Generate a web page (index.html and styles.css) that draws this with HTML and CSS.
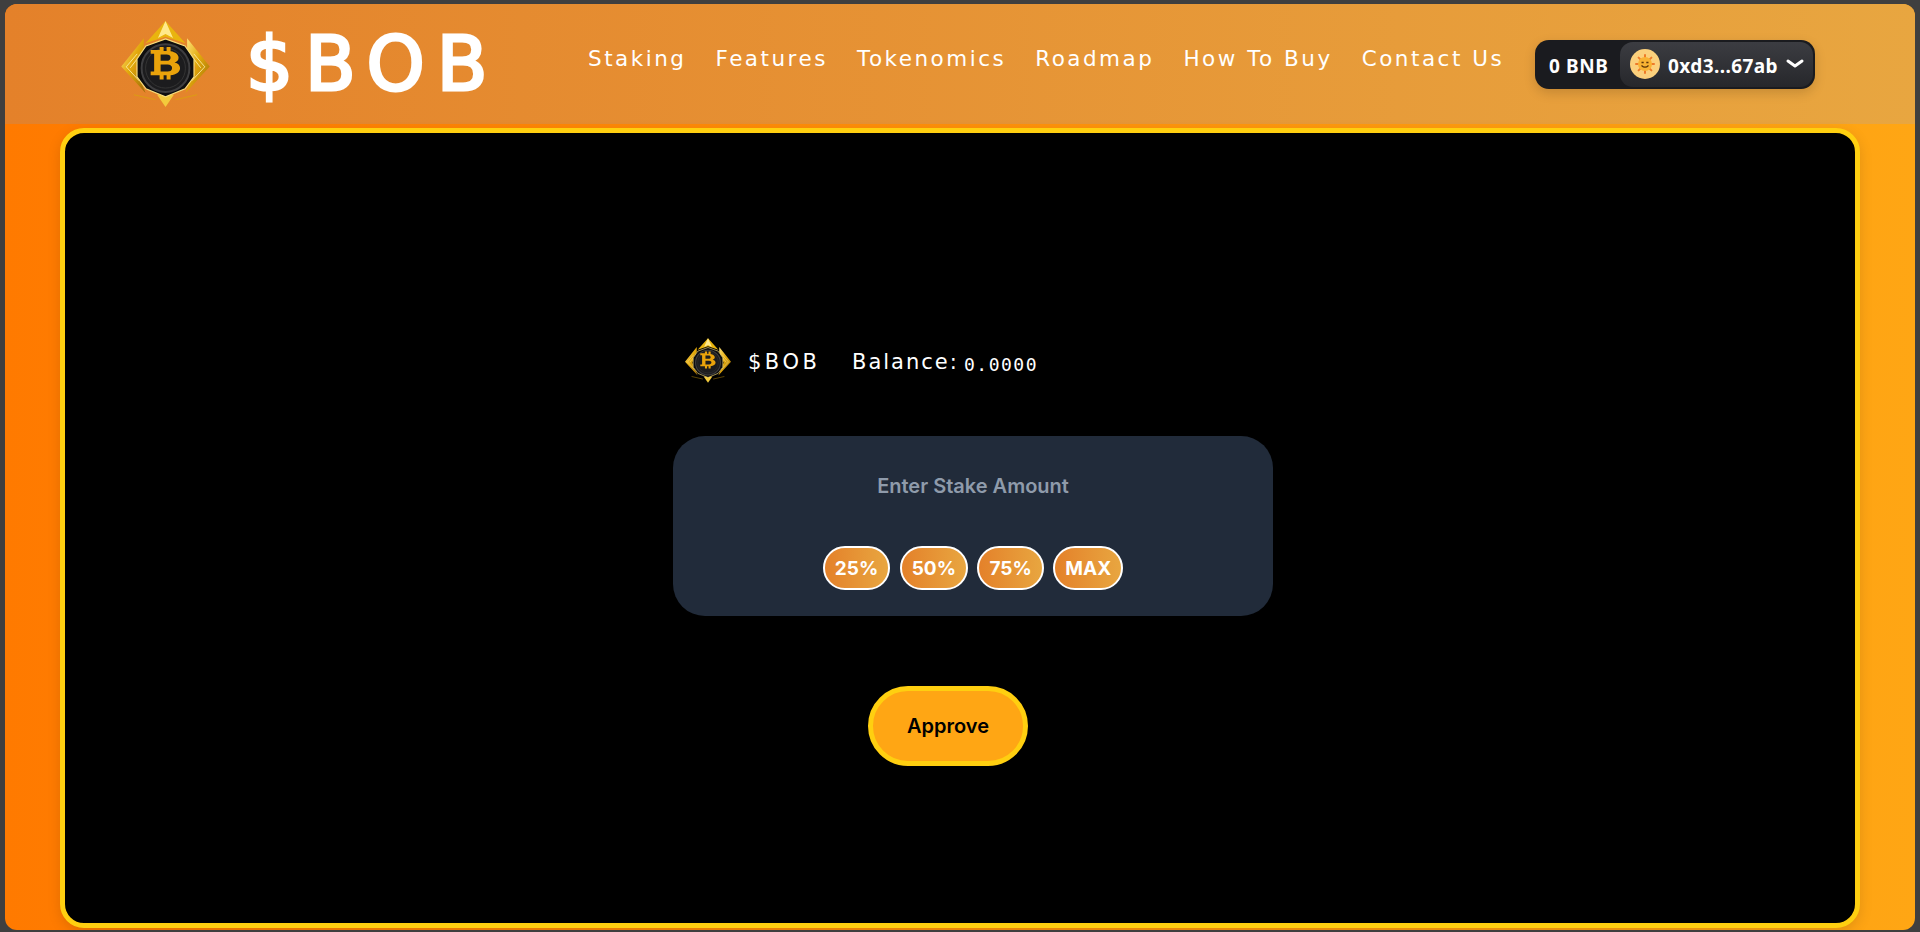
FILE: index.html
```html
<!DOCTYPE html>
<html lang="en">
<head>
    <meta charset="UTF-8">
    <meta name="viewport" content="width=device-width, initial-scale=1">
    <title>$BOB Staking</title>
    <link rel="stylesheet" href="styles.css">
</head>
<body>
    <svg class="defs" width="0" height="0" aria-hidden="true">
        <defs>
            <linearGradient id="goldGrad" x1="0" y1="0" x2="1" y2="1">
                <stop offset="0" stop-color="#ffe680"/>
                <stop offset="0.45" stop-color="#e3a90c"/>
                <stop offset="1" stop-color="#9a6a06"/>
            </linearGradient>
            <symbol id="bobLogo" viewBox="0 0 88.800 86.300">
                <!-- top peak -->
                <path d="M44.400 0 L64.400 22.300 L44.400 15.700 L24.400 22.300 Z" fill="#e9b40e"/>
                <path d="M44.400 0 L52 17 L44.400 13 L36.800 17 Z" fill="#ffe98a"/>
                <!-- side wings -->
                <path d="M22.700 17.300 L0 45.700 L24.400 72.300 L14 47 L22.700 30 Z" fill="url(#goldGrad)"/>
                <path d="M66.100 17.300 L88.800 45.700 L64.400 72.300 L74.800 47 L66.100 30 Z" fill="url(#goldGrad)"/>
                <path d="M5 46 L16 33 M9 47 L16 38 M5 46 L18 60" stroke="#fff3b0" stroke-width="0.800" fill="none"/>
                <path d="M83.800 46 L72.800 33 M79.800 47 L72.800 38 M83.800 46 L70.800 60" stroke="#fff3b0" stroke-width="0.800" fill="none"/>
                <!-- bottom point and thin lines -->
                <path d="M44.400 86.300 L36 74 L52.800 74 Z" fill="#f3cb3c"/>
                <path d="M12.700 74 L34.400 79 M76.100 74 L54.400 79" stroke="#d9a20c" stroke-width="0.800" fill="none"/>
                <!-- black body -->
                <path d="M44.400 18 L64 25 L73 38 L73 56 L64 68 L44.400 76 L24.800 68 L15.800 56 L15.800 38 L24.800 25 Z" fill="#0e0e0f" stroke="#f7dc7a" stroke-width="1.200"/>
                <circle cx="44.400" cy="47.300" r="24" fill="#1c1c1e" stroke="#3e3e40" stroke-width="2"/>
                <circle cx="44.400" cy="47.300" r="20" fill="none" stroke="#333" stroke-width="1"/>
                <path transform="translate(1.500 6.800) scale(1 0.800)" fill-rule="evenodd" fill="#eaa30b" d="M37 24 h4 v5 h3 v-5 h4 v5.500 c5 1 8 4 8 8 c0 3 -1.500 5 -4 6 c3.500 1 5.500 3.500 5.500 7 c0 5 -4 8.500 -9.500 9 v5.500 h-4 v-5.500 h-3 v5.500 h-4 v-5.500 h-9 v-4.500 h3.500 v-22.500 h-3.500 v-4.500 h9 Z M38 33.500 v8 h6 c2.500 0 4 -1.500 4 -4 c0 -2.500 -1.500 -4 -4 -4 Z M38 46 v9 h7 c2.700 0 4.500 -1.700 4.500 -4.500 c0 -2.800 -1.800 -4.500 -4.500 -4.500 Z"/>
            </symbol>
        </defs>
    </svg>

    <div class="frame">
        <header class="topbar">
            <a class="brand" href="#">
                <svg class="brand-logo"><use href="#bobLogo"/></svg>
                <span class="brand-name">$BOB</span>
            </a>
            <nav class="nav">
                <a href="#">Staking</a>
                <a href="#">Features</a>
                <a href="#">Tokenomics</a>
                <a href="#">Roadmap</a>
                <a href="#">How To Buy</a>
                <a href="#">Contact Us</a>
            </nav>
            <div class="wallet">
                <span class="wallet-balance">0 BNB</span>
                <button class="wallet-account">
                    <span class="avatar">
                        <svg viewBox="0 0 30 30" width="30" height="30">
                            <g stroke="#ee7a2a" stroke-width="2" stroke-linecap="round">
                                <path d="M15 6v18M6 15h18M8.600 8.600l12.800 12.800M21.400 8.600L8.600 21.400"/>
                            </g>
                            <circle cx="15" cy="15" r="7" fill="#f9b233"/>
                            <path d="M11.500 13.500h2.200M16.300 13.500h2.200" stroke="#5a3208" stroke-width="1.300"/>
                            <path d="M11.500 16.500q3.500 3.500 7 0" stroke="#5a3208" stroke-width="1.200" fill="none"/>
                        </svg>
                    </span>
                    <span class="wallet-address">0xd3...67ab</span>
                    <svg class="chevron" viewBox="0 0 18 10" width="18" height="10">
                        <path d="M2 2l7 5 7-5" fill="none" stroke="#fff" stroke-width="3" stroke-linecap="round" stroke-linejoin="round"/>
                    </svg>
                </button>
            </div>
        </header>

        <main class="content">
            <section class="panel">
                <div class="token-row">
                    <svg class="token-logo"><use href="#bobLogo"/></svg>
                    <span class="token-name">$BOB</span>
                    <span class="token-label">Balance:</span>
                    <span class="token-value">0.0000</span>
                </div>

                <div class="stake-card">
                    <p class="stake-title">Enter Stake Amount</p>
                    <div class="stake-options">
                        <button class="pct-btn">25%</button>
                        <button class="pct-btn">50%</button>
                        <button class="pct-btn">75%</button>
                        <button class="pct-btn">MAX</button>
                    </div>
                </div>

                <button class="approve-btn">Approve</button>
            </section>
        </main>
    </div>
</body>
</html>
```

FILE: styles.css
```css
* {
    box-sizing: border-box;
}

html, body {
    height: 100%;
}

body {
    margin: 0;
    padding: 4px 5px 2px 5px;
    background-color: #3f3f3f;
    overflow: hidden;
    font-family: 'Inter', sans-serif;
}

.defs {
    display: block;
    height: 0;
}

button {
    font-family: inherit;
    cursor: pointer;
}

a {
    color: inherit;
    text-decoration: none;
}

.frame {
    height: 926px;
    border-radius: 12px;
    overflow: hidden;
    display: flex;
    flex-direction: column;
    background: linear-gradient(90deg, #ff7a00, #ffa614);
}

.topbar {
    height: 120px;
    flex-shrink: 0;
    display: flex;
    align-items: center;
    padding: 0 100px 0 116px;
    background: linear-gradient(90deg, #e4812a, #e8a640);
    color: #fff;
}

.brand {
    display: flex;
    align-items: center;
    gap: 36px;
}

.brand-logo {
    width: 89px;
    height: 86px;
}

.brand-name {
    font-family: 'DejaVu Sans', sans-serif;
    font-size: 74px;
    line-height: 1;
    width: 242px;
    letter-spacing: 12px;
    -webkit-text-stroke: 3px #fff;
    white-space: nowrap;
}

.nav {
    display: flex;
    gap: 29px;
    margin-left: 100px;
    margin-top: -11px;
    font-family: 'DejaVu Sans', sans-serif;
    font-size: 21.500px;
    letter-spacing: 2.500px;
    white-space: nowrap;
}

.wallet {
    margin-left: auto;
    height: 49px;
    width: 280px;
    flex-shrink: 0;
    display: flex;
    align-items: center;
    background-color: #1a1b1f;
    border-radius: 14px;
    box-shadow: 0 4px 12px rgba(0, 0, 0, 0.15);
    font-family: 'Noto Sans', sans-serif;
    font-weight: 700;
    font-size: 19px;
    color: #fff;
}

.wallet-balance {
    padding: 4px 0 0 14px;
    width: 85px;
    flex-shrink: 0;
    letter-spacing: 0.600px;
    white-space: nowrap;
}

.wallet-account {
    flex: 1;
    height: 45px;
    margin-right: 2px;
    display: flex;
    align-items: center;
    gap: 8px;
    padding: 0 9px 0 10px;
    border: none;
    border-radius: 13px;
    background: linear-gradient(#3c3d42, #26272b);
    color: #fff;
    font: inherit;
}

.wallet-address {
    padding-top: 4px;
    letter-spacing: 0.400px;
    white-space: nowrap;
}

.avatar {
    width: 30px;
    height: 30px;
    flex-shrink: 0;
    border-radius: 50%;
    background-color: #fbd07c;
    display: flex;
}

.chevron {
    flex-shrink: 0;
}

.content {
    flex: 1;
    padding: 4px 55px 2px 55px;
}

.panel {
    height: 100%;
    background-color: #000;
    border: 5px solid #ffcf10;
    border-radius: 24px;
    box-shadow: 0 4px 14px rgba(0, 0, 0, 0.12);
    padding: 202px 0 0 608px;
    display: flex;
    flex-direction: column;
    align-items: flex-start;
}

.token-row {
    height: 51px;
    display: flex;
    align-items: center;
    margin-left: 12px;
    color: #fff;
    font-family: 'DejaVu Sans', sans-serif;
    font-size: 21px;
    letter-spacing: 2px;
    white-space: nowrap;
}

.token-logo {
    width: 46px;
    height: 49px;
    margin-right: 17px;
}

.token-name {
    width: 104px;
    margin-top: 2px;
    letter-spacing: 3.500px;
}

.token-label {
    width: 112px;
    margin-top: 2px;
}

.token-value {
    margin-top: 7px;
    font-family: 'DejaVu Sans Mono', monospace;
    font-size: 18px;
    letter-spacing: 1.500px;
}

.stake-card {
    width: 600px;
    height: 180px;
    margin-top: 50px;
    padding-top: 38px;
    background-color: #212b3a;
    border-radius: 32px;
    display: flex;
    flex-direction: column;
    align-items: center;
}

.stake-title {
    margin: 0;
    color: #8f9bab;
    font-size: 20px;
    font-weight: 600;
    line-height: 24px;
}

.stake-options {
    display: flex;
    gap: 9.500px;
    margin-top: 48px;
}

.pct-btn {
    height: 44px;
    padding: 0 10px;
    border: 2px solid #fff;
    border-radius: 22px;
    background: linear-gradient(90deg, #e4812a, #e8a640);
    color: #fff;
    font-size: 19px;
    font-weight: 700;
}

.approve-btn {
    width: 160px;
    height: 80px;
    margin: 70px 0 0 195px;
    border: 5px solid #ffcf10;
    border-radius: 40px;
    background-color: #ffa614;
    color: #000;
    font-size: 20px;
    font-weight: 600;
}
```
